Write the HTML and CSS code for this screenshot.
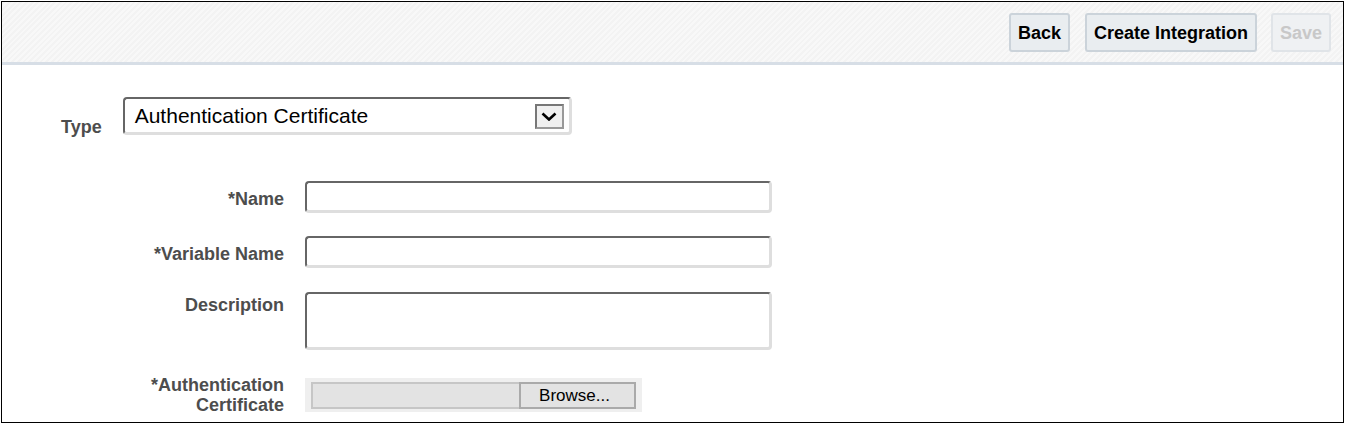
FILE: index.html
```html
<!DOCTYPE html>
<html lang="en">
<head>
<meta charset="utf-8">
<title>Create Lookup</title>
<link rel="stylesheet" href="styles.css">
</head>
<body>
<div class="frame">
  <div class="toolbar">
    <button class="btn">Back</button>
    <button class="btn">Create Integration</button>
    <button class="btn btn-disabled" disabled>Save</button>
  </div>
  <div class="content">
    <div class="type-row">
      <label class="type-label">Type</label>
      <div class="select">
        <span class="select-text">Authentication Certificate</span>
        <span class="select-btn">
          <svg width="16" height="9" viewBox="0 0 16 9"><path d="M1.5 1.5 L8 7.5 L14.5 1.5" fill="none" stroke="#000" stroke-width="2.6"/></svg>
        </span>
      </div>
    </div>
    <div class="fields">
      <div class="row row-center r-name">
        <label class="lbl lbl-mid">*Name</label>
        <input class="inp" type="text">
      </div>
      <div class="row row-center r-var">
        <label class="lbl lbl-mid">*Variable Name</label>
        <input class="inp" type="text">
      </div>
      <div class="row r-desc">
        <label class="lbl lbl-desc">Description</label>
        <textarea class="inp area"></textarea>
      </div>
      <div class="row r-file">
        <label class="lbl lbl-file">*Authentication<br>Certificate</label>
        <div class="file">
          <span class="file-field"></span>
          <span class="file-btn">Browse...</span>
        </div>
      </div>
    </div>
  </div>
</div>
</body>
</html>
```
FILE: styles.css
```css
html, body {
  margin: 0;
  padding: 0;
  background: #fff;
}
body {
  font-family: "Liberation Sans", Arial, sans-serif;
}
.frame {
  margin: 1px 0 0 1px;
  width: 1343px;
  height: 422px;
  box-sizing: border-box;
  border: 1px solid #000;
  overflow: hidden;
  background: #fff;
}
.toolbar {
  box-sizing: border-box;
  border-bottom: 3px solid #d7dee6;
  height: 63px;
  padding: 11px 12px 0 0;
  display: flex;
  justify-content: flex-end;
  align-items: flex-start;
  gap: 15px;
  background: repeating-linear-gradient(-45deg, #f3f3f3 0 2px, #f8f8f8 2px 4px);
}
.btn {
  height: 39px;
  box-sizing: border-box;
  padding: 1px 7px 0 7px;
  border: 2px solid #cbd3da;
  border-radius: 3px;
  background: #e9edf0;
  font-family: "Liberation Sans", Arial, sans-serif;
  font-weight: bold;
  font-size: 18px;
  color: #000;
}
.btn-disabled {
  color: #c8c8c8;
  border-color: #e0e4e8;
  background: #eff1f3;
}
.toolbar .btn + .btn-disabled {
  margin-left: -1px;
}
.content {
  padding-top: 32px;
}
.type-row {
  display: flex;
  align-items: flex-end;
  padding-left: 59px;
  gap: 21px;
}
.type-label {
  font-weight: bold;
  font-size: 18px;
  line-height: 20px;
  color: #4d4d4d;
  margin-bottom: -2px;
}
.select {
  width: 449px;
  height: 38px;
  box-sizing: border-box;
  border-style: solid;
  border-width: 2px 3px 3px 2px;
  border-color: #666 #dedede #dedede #666;
  border-radius: 4px;
  display: flex;
  align-items: center;
  padding: 0 5px 0 10px;
}
.select-text {
  flex: 1;
  font-size: 21px;
  color: #000;
  line-height: 24px;
}
.select-btn {
  width: 29px;
  height: 25px;
  box-sizing: border-box;
  border-style: solid;
  border-width: 2px;
  border-color: #777 #999 #999 #777;
  background: #f0f0f0;
  display: flex;
  align-items: center;
  justify-content: center;
  margin-top: 1px;
}
.fields {
  display: flex;
  flex-direction: column;
  margin-top: 46px;
}
.row {
  display: flex;
  align-items: flex-start;
  gap: 21px;
}
.row-center {
  align-items: center;
}
.r-var {
  margin-top: 23px;
}
.r-desc {
  margin-top: 24px;
}
.r-file {
  margin-top: 27px;
}
.lbl {
  width: 282px;
  text-align: right;
  font-weight: bold;
  font-size: 18px;
  line-height: 20px;
  color: #4d4d4d;
}
.lbl-mid {
  padding-top: 3px;
}
.lbl-desc {
  padding-top: 3px;
}
.lbl-file {
  margin-top: -2px;
}
.inp {
  display: block;
  margin: 0;
  width: 467px;
  height: 32px;
  box-sizing: border-box;
  border-style: solid;
  border-width: 2px 3px 3px 2px;
  border-color: #666 #dedede #dedede #666;
  border-radius: 4px;
  background: #fff;
  outline: none;
  font-family: "Liberation Sans", Arial, sans-serif;
  font-size: 16px;
}
.area {
  height: 58px;
  resize: none;
}
.file {
  display: flex;
  width: 337px;
  height: 34px;
  box-sizing: border-box;
  background: #efefef;
  padding: 4px 6px 3px 6px;
  margin-top: 1px;
}
.file-field {
  width: 208px;
  box-sizing: border-box;
  background: #e3e3e3;
  border: 2px solid #c6c6c6;
  border-right: none;
}
.file-btn {
  width: 117px;
  box-sizing: border-box;
  background: #e3e3e3;
  border: 2px solid #aaaaaa;
  font-size: 17px;
  color: #000;
  display: flex;
  align-items: center;
  justify-content: center;
  padding-right: 6px;
}
```
